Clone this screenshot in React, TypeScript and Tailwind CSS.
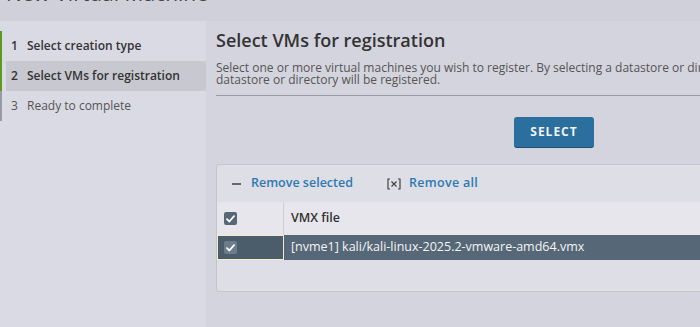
import React from "react";

const steps = [
  { n: 1, label: "Select creation type", done: true },
  { n: 2, label: "Select VMs for registration", done: true, active: true },
  { n: 3, label: "Ready to complete", done: false },
];

const CheckBox = ({ light }: { light?: boolean }) => (
  <span
    className={`flex h-[13px] w-[13px] items-center justify-center rounded-[2px] ${
      light ? "bg-[#6b7d8c]" : "bg-[#566878]"
    }`}
  >
    <svg width="9" height="8" viewBox="0 0 9 8" fill="none">
      <path d="M1 4.2 3.4 6.5 8 1.2" stroke="#fff" strokeWidth="1.8" strokeLinecap="round" strokeLinejoin="round" />
    </svg>
  </span>
);

export default function App() {
  return (
    <div className="flex h-[327px] w-[700px] flex-col overflow-hidden bg-[#d4d4de] font-['Open_Sans',sans-serif] text-[#333]">
      {/* dialog title, cut off at top */}
      <div className="h-[21px] shrink-0 overflow-hidden bg-[#d0d0da]">
        <div className="-mt-[19px] pl-[6px] text-[21px] leading-[24px] text-[#444]">New Virtual Machine</div>
      </div>

      <div className="flex flex-1">
        {/* wizard steps */}
        <nav className="w-[206px] shrink-0 bg-[#dadae4] pt-[10px]">
          {steps.map((s) => (
            <div key={s.n} className="flex h-[30px]">
              <div className={`w-[2px] ${s.done ? "bg-[#5c9a1e]" : "bg-[#9a9aa4]"}`} />
              <div
                className={`ml-[4px] flex flex-1 items-center text-[12px] ${
                  s.active ? "bg-[#c8c8d0] font-semibold text-[#333]" : s.done ? "font-semibold text-[#333]" : "text-[#555]"
                }`}
              >
                <span className="w-[17px] pl-[5px]">{s.n}</span>
                <span className="pl-[4px]">{s.label}</span>
              </div>
            </div>
          ))}
        </nav>

        {/* content */}
        <main className="flex-1 overflow-hidden pl-[10px] pt-[7px]">
          <h2 className="whitespace-nowrap text-[18px] font-semibold leading-[24px] text-[#333]">Select VMs for registration</h2>
          <p className="mt-[10px] w-[640px] text-[12px] leading-[12px] text-[#555]">
            Select one or more virtual machines you wish to register. By selecting a datastore or directory, all VMs in that
            datastore or directory will be registered.
          </p>
          <div className="mt-[9px] h-px w-[600px] bg-[#9a9aa6]" />

          <div className="flex w-[676px] justify-center pt-[21px]">
            <button className="h-[31px] w-[80px] rounded-[3px] border-b border-[#1d4f72] bg-[#2a6f9e] text-[12px] font-bold tracking-[1px] text-[#f2f2f2]">
              SELECT
            </button>
          </div>

          <div className="mt-[16px] h-[128px] w-[600px] overflow-hidden rounded-[3px] border border-[#c4c4cc] bg-[#dedee6]">
            <div className="flex h-[37px] items-center text-[12.5px] font-semibold text-[#2e7ab0]">
              <span className="ml-[15px] h-[2px] w-[9px] bg-[#666]" />
              <span className="ml-[10px]">Remove selected</span>
              <svg className="ml-[34px]" width="14" height="12" viewBox="0 0 14 12" fill="none" stroke="#444" strokeWidth="1.2">
                <path d="M3 1H1V11H3M11 1H13V11H11" />
                <path d="M4.5 3.5 9.5 8.5M9.5 3.5 4.5 8.5" />
              </svg>
              <span className="ml-[8px] tracking-[0.3px]">Remove all</span>
            </div>
            <div className="flex h-[33px] bg-[#e6e6ec]">
              <div className="flex w-[67px] items-center border-r border-[#cfcfd6] pl-[7px]">
                <CheckBox />
              </div>
              <div className="flex items-center pl-[7px] text-[12.5px] font-semibold text-[#333]">VMX file</div>
            </div>
            <div className="flex h-[25px] bg-[#566878]">
              <div className="flex w-[67px] items-center border border-[#f0ecd0] bg-[#4b5c6b] pl-[6px]">
                <CheckBox light />
              </div>
              <div className="flex items-center pl-[7px] text-[12.5px] text-[#f4f4f4]">
                [nvme1] kali/kali-linux-2025.2-vmware-amd64.vmx
              </div>
            </div>
          </div>
        </main>
      </div>
    </div>
  );
}
